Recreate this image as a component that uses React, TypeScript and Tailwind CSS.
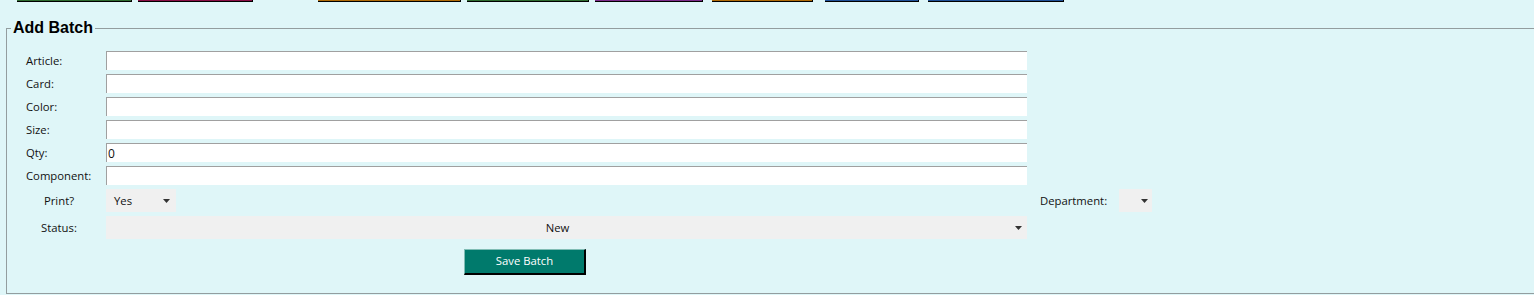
import React from "react";

const topButtons = [
  { w: "w-[115px]", ml: "ml-[17px]", bg: "bg-[#2f6b2f]" },
  { w: "w-[115px]", ml: "ml-[6px]", bg: "bg-[#8a0f45]" },
  { w: "w-[143px]", ml: "ml-[65px]", bg: "bg-[#b06a08]" },
  { w: "w-[122px]", ml: "ml-[6px]", bg: "bg-[#2f6b2f]" },
  { w: "w-[108px]", ml: "ml-[6px]", bg: "bg-[#7d2d8a]" },
  { w: "w-[101px]", ml: "ml-[9px]", bg: "bg-[#b06a08]" },
  { w: "w-[94px]", ml: "ml-[12px]", bg: "bg-[#1f4f96]" },
  { w: "w-[136px]", ml: "ml-[9px]", bg: "bg-[#1f4f96]" },
];

const fields = ["Article:", "Card:", "Color:", "Size:", "Qty:", "Component:"];

function Arrow() {
  return (
    <svg width="7" height="4" viewBox="0 0 7 4" className="shrink-0">
      <path d="M0 0H7L3.5 4Z" fill="#333" />
    </svg>
  );
}

function App() {
  return (
    <div
      className="w-full h-[295px] overflow-hidden bg-[#dff6f8] text-[11.3px] text-[#111]"
      style={{ fontFamily: '"Open Sans", "Liberation Sans", sans-serif' }}
    >
      {/* top action buttons, only their bottom edge shows */}
      <div className="flex h-[2px]">
        {topButtons.map((b, i) => (
          <div key={i} className={`${b.w} ${b.ml} ${b.bg} shrink-0 h-[2px] border-b border-r border-black`} />
        ))}
      </div>

      <fieldset className="mt-[17px] ml-[6px] w-[1560px] border border-[#939d9f] pt-[14px] pb-[18px]">
        <legend
          className="ml-[4px] px-[2px] text-[16px] leading-[18px] font-bold text-black"
          style={{ fontFamily: '"Liberation Sans", Arial, sans-serif' }}
        >
          Add Batch
        </legend>

        <div className="flex flex-col pl-[19px]">
          <div className="flex flex-col gap-[4px]">
            {fields.map((f) => (
              <div key={f} className="flex items-center h-[19px]">
                <label className="w-[80px] pt-[2px]">{f}</label>
                <div className="w-[921px] h-[19px] bg-white border-t border-l border-[#a0a0a0] pl-[1px] pt-[1px] flex items-center text-[12px] leading-none">
                  {f === "Qty:" ? "0" : ""}
                </div>
              </div>
            ))}
          </div>

          <div className="flex items-center h-[23px] mt-[4px]">
            <div className="w-[80px] pt-[1px]">
              <span className="block w-[66px] text-center">Print?</span>
            </div>
            <div className="w-[921px] flex">
              <div className="w-[70px] h-[23px] bg-[#f0f0f0] flex items-center pl-[8px] pr-[6px]">
                <span className="pt-[1px]">Yes</span>
                <span className="ml-auto">
                  <Arrow />
                </span>
              </div>
            </div>
            <label className="ml-[13px] w-[79px] pt-[1px]">Department:</label>
            <div className="w-[33px] h-[23px] bg-[#f0f0f0] flex items-center justify-end pr-[4px]">
              <Arrow />
            </div>
          </div>

          <div className="flex items-center h-[23px] mt-[4px]">
            <div className="w-[80px] pt-[1px]">
              <span className="block w-[66px] text-center">Status:</span>
            </div>
            <div className="w-[921px] h-[23px] bg-[#f0f0f0] flex items-center pr-[5px]">
              <span className="flex-1 text-center pr-[6px] pt-[1px]">New</span>
              <Arrow />
            </div>
          </div>

          <div className="flex mt-[10px]">
            <button className="ml-[438px] w-[122px] h-[26px] bg-[#007a6c] text-white text-[11.3px] border-t border-l border-b-2 border-r-2 border-t-[#7fbdb5] border-l-[#7fbdb5] border-b-black border-r-black">
              Save Batch
            </button>
          </div>
        </div>
      </fieldset>
    </div>
  );
}

export default App;
